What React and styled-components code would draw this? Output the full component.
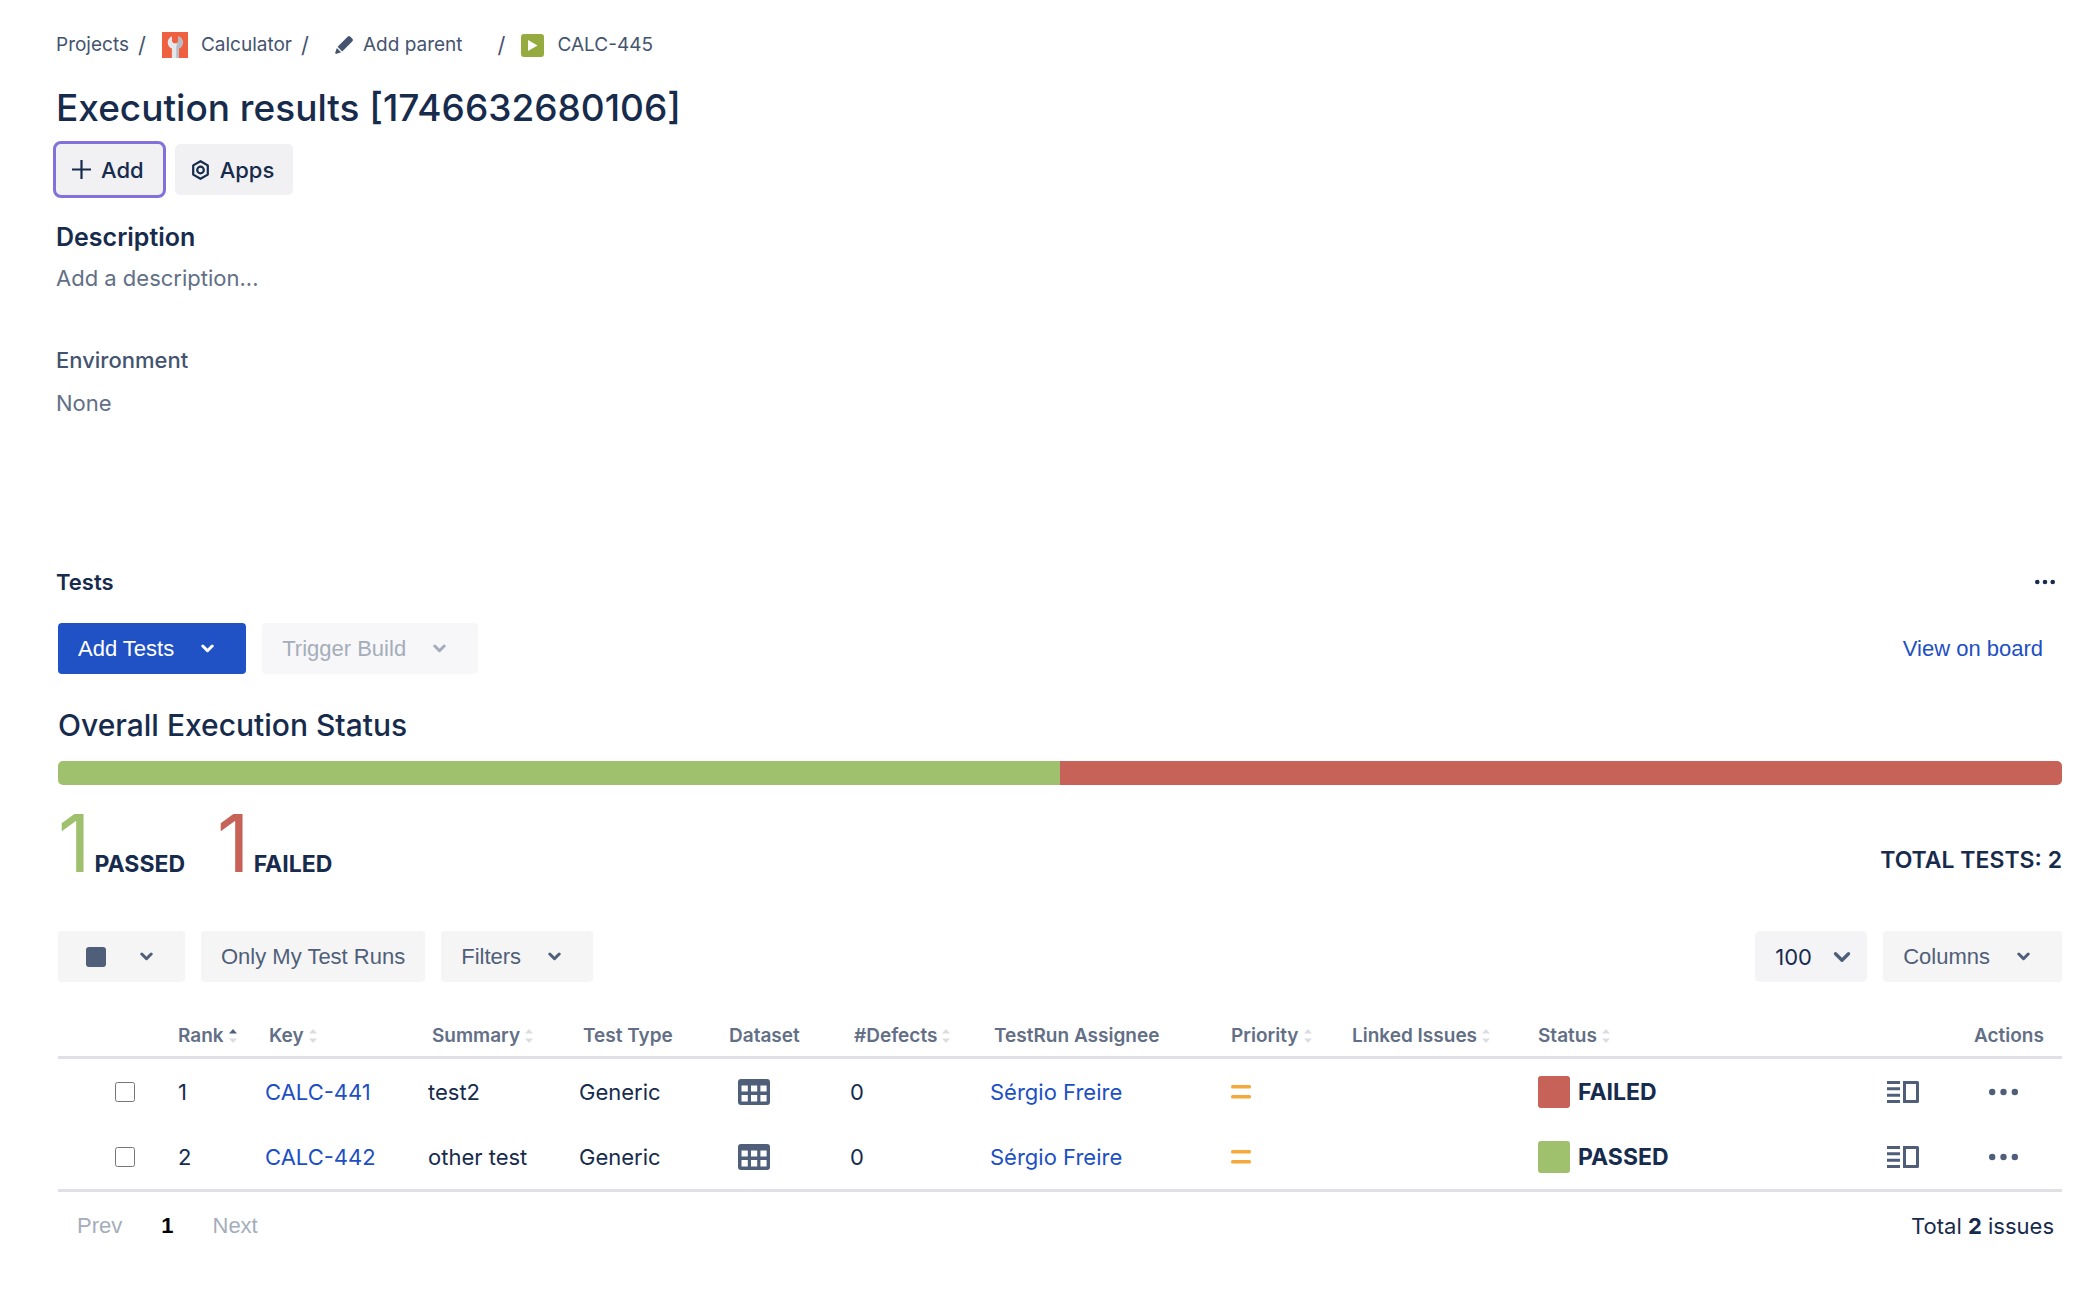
import React from "react";
import styled, { createGlobalStyle } from "styled-components";

const ui = `Inter, "Liberation Sans", sans-serif`;
const control = `"Liberation Sans", Arial, sans-serif`;

const c = {
  text: "#172b4d",
  subtle: "#44546f",
  muted: "#626f86",
  steel: "#505f79",
  disabled: "#a5adba",
  link: "#1d4fc4",
  passed: "#9fc16d",
  failed: "#c66257",
  line: "#e0e0e6",
  neutral: "#f1f1f4",
  soft: "#f5f5f6",
};

const GlobalStyle = createGlobalStyle`
  *, *::before, *::after { box-sizing: border-box; }
  body { margin: 0; background: #fff; color: ${c.text}; font-family: ${ui}; font-size: 22px; line-height: 32px; }
  h1, h2, h3, p, ol { margin: 0; padding: 0; }
  a { color: inherit; text-decoration: none; }
  button, select { border: 0; font: inherit; color: inherit; cursor: pointer; }
  svg { display: block; flex: none; }
`;

const Page = styled.main`
  padding: 28px 36px 40px 56px;
`;

const Crumbs = styled.ol`
  display: flex;
  align-items: center;
  height: 34px;
  list-style: none;
  font-size: 19px;
  color: ${c.subtle};
`;

const Crumb = styled.li`
  display: flex;
  align-items: center;
  & + &::before {
    content: "/";
    font-size: 22px;
    padding: 0 16px 0 9px;
  }
`;

const CrumbLink = styled.a`
  display: flex;
  align-items: center;
  gap: 13px;
`;

const ParentButton = styled.button`
  display: flex;
  align-items: center;
  gap: 10px;
  padding: 0 26px 0 10px;
  background: none;
`;

const Title = styled.h1`
  margin-top: 22px;
  font-size: 37px;
  line-height: 48px;
  font-weight: 500;
`;

const QuickActions = styled.div`
  display: flex;
  gap: 12px;
  margin-top: 12px;
`;

const QuickButton = styled.button`
  display: flex;
  align-items: center;
  gap: 10px;
  height: 51px;
  padding: 0 19px 0 16px;
  border-radius: 5px;
  background: ${c.neutral};
  font-weight: 500;
  outline: ${(p) => (p.$focused ? "3px solid #8270db" : "none")};
`;

const Description = styled.section`
  margin-top: 26px;
`;

const SectionTitle = styled.h2`
  font-size: 25px;
  line-height: 32px;
  font-weight: 600;
`;

const Placeholder = styled.button`
  display: block;
  margin-top: 9px;
  padding: 0;
  background: none;
  color: ${c.muted};
`;

const Environment = styled.section`
  margin-top: 50px;
`;

const FieldLabel = styled.h3`
  font-size: 22px;
  font-weight: 500;
  color: ${c.subtle};
`;

const FieldValue = styled.p`
  margin-top: 11px;
  color: ${c.muted};
`;

const Tests = styled.section`
  margin-top: 147px;
`;

const Split = styled.div`
  display: flex;
  align-items: center;
  justify-content: space-between;
`;

const TestsTitle = styled.h2`
  font-size: 22px;
  font-weight: 600;
`;

const IconButton = styled.button`
  display: flex;
  align-items: center;
  justify-content: center;
  padding: 4px ${(p) => p.$pad || 0}px;
  background: none;
  color: ${(p) => p.$color || c.steel};
`;

const Panel = styled.div`
  padding-left: 2px;
`;

const ActionBar = styled(Split)`
  margin-top: 25px;
  font-family: ${control};
`;

const Group = styled.div`
  display: flex;
  gap: 16px;
`;

const variants = {
  primary: `background: #2052c6; color: #fff;`,
  disabled: `background: #f7f7f9; color: ${c.disabled};`,
  neutral: `background: ${c.soft}; color: ${c.steel};`,
  icon: `background: ${c.soft}; color: ${c.steel}; gap: 34px; padding-left: 28px;`,
};

const Button = styled.button`
  display: flex;
  align-items: center;
  gap: 27px;
  height: 51px;
  padding: 0 ${(p) => (p.$menu ? 32 : 20)}px 0 20px;
  border-radius: 4px;
  font-family: ${control};
  font-size: 22px;
  ${(p) => variants[p.$variant || "neutral"]}
`;

const BoardLink = styled.a`
  padding-right: 19px;
  color: ${c.link};
`;

const StatusTitle = styled.h2`
  margin-top: 31px;
  font-size: 30px;
  line-height: 40px;
  font-weight: 500;
`;

const Progress = styled.div`
  display: flex;
  height: 24px;
  margin-top: 16px;
  border-radius: 5px;
  overflow: hidden;
`;

const Segment = styled.div`
  flex: ${(p) => p.$count} 1 0;
  background: ${(p) => c[p.$status]};
`;

const Summary = styled(Split)`
  margin-top: 18px;
  font-size: 23px;
  font-weight: 700;
`;

const Counters = styled.div`
  display: flex;
  gap: 32px;
`;

const Counter = styled.div`
  display: flex;
  align-items: baseline;
  gap: 4px;
`;

const CounterValue = styled.span`
  font-size: 80px;
  line-height: 80px;
  font-weight: 400;
  color: ${(p) => c[p.$status]};
`;

const Total = styled.p`
  padding-top: 34px;
  font-weight: 600;
`;

const Toolbar = styled(Split)`
  margin-top: 48px;
`;

const SelectBox = styled.label`
  position: relative;
  color: ${c.steel};
  svg {
    position: absolute;
    right: 16px;
    top: 20px;
    pointer-events: none;
  }
`;

const Select = styled.select`
  appearance: none;
  width: 112px;
  height: 51px;
  padding: 0 20px;
  border-radius: 5px;
  background: #f4f4f7;
  color: ${c.text};
`;

const Table = styled.table`
  width: 100%;
  margin-top: 34px;
  table-layout: fixed;
  border-collapse: separate;
  border-spacing: 0;
  border-bottom: 3px solid ${c.line};
`;

const Th = styled.th`
  height: 43px;
  padding: 0 0 0 ${(p) => (p.$flush ? 8 : 12)}px;
  border-bottom: 3px solid ${c.line};
  text-align: left;
  white-space: nowrap;
  font-size: 19px;
  font-weight: 600;
  color: ${c.muted};
`;

const HeadLabel = styled.span`
  display: flex;
  align-items: center;
  gap: 5px;
`;

const Td = styled.td`
  height: 65px;
  padding: 0 0 0 8px;
  white-space: nowrap;
  a { color: ${c.link}; }
`;

const CheckCell = styled(Td)`
  padding-left: 57px;
`;

const Check = styled.input`
  display: block;
  width: 20px;
  height: 20px;
  margin: 0;
`;

const Status = styled.span`
  display: flex;
  align-items: center;
  gap: 8px;
  font-size: 23px;
  font-weight: 700;
  &::before {
    content: "";
    width: 32px;
    height: 32px;
    border-radius: 3px;
    background: ${(p) => c[p.$status]};
  }
`;

const Footer = styled(Split)`
  padding: 18px 8px 0 19px;
`;

const Pager = styled.nav`
  display: flex;
  gap: 39px;
  font-family: ${control};
`;

const PageButton = styled.button`
  padding: 0;
  background: none;
  color: ${(p) => (p.$current ? "#000" : c.disabled)};
  font-weight: ${(p) => (p.$current ? 700 : 400)};
`;

const Chevron = ({ w = 13 }) => (
  <svg width={w} height={(w * 9) / 13} viewBox="0 0 13 9" fill="none" stroke="currentColor" strokeWidth={w > 13 ? 2.4 : 3} strokeLinecap="round" strokeLinejoin="round">
    <path d="M1.8 2l4.7 4.7L11.200 2" />
  </svg>
);

const Dots = ({ w, r }) => (
  <svg width={w} height={8} viewBox={`0 0 ${w} 8`} fill="currentColor">
    <circle cx={r} cy="4" r={r} />
    <circle cx={w / 2} cy="4" r={r} />
    <circle cx={w - r} cy="4" r={r} />
  </svg>
);

const Sort = ({ up }) => (
  <svg width="8" height="14" viewBox="0 0 8 14">
    <path d="M4 0l4 4.500H0z" fill={up ? c.steel : "#dcdde3"} />
    <path d="M4 14l4-4.500H0z" fill="#dcdde3" />
  </svg>
);

const ProjectIcon = () => (
  <svg width="26" height="26" viewBox="0 0 26 26">
    <path fill="#ee6040" d="M0 0h26v26H0z" />
    <path fill="#e4e8ec" d="M10 4.200v5l1.400 2h3.700l1.400-2v-5c2.500 1 4.300 3.400 4.300 6.200 0 2.800-1.700 5.100-4.100 6.200V26h-6.800v-9.400c-2.400-1.100-4.200-3.400-4.200-6.200 0-2.800 1.800-5.200 4.300-6.200z" />
    <path fill="#b4bcc6" d="M15.100 11.200l1.400-2v-5c2.500 1 4.300 3.400 4.300 6.200 0 2.800-1.700 5.100-4.100 6.200V26h-2.400V15z" />
  </svg>
);

const PencilIcon = () => (
  <svg width="18" height="18" viewBox="0 0 18 18" fill="currentColor">
    <path d="M12.600.8a2 2 0 0 1 2.800 0l1.800 1.800a2 2 0 0 1 0 2.800L7.200 15.400l-4.600-4.600zM1.800 11.900l4.300 4.300-4.600 1.600a.9.9 0 0 1-1.200-1.200z" />
  </svg>
);

const ExecutionIcon = () => (
  <svg width="23" height="23" viewBox="0 0 23 23">
    <rect width="23" height="23" rx="3" fill="#95ab3f" />
    <path d="M7 6l9.500 5.500L7 17z" fill="#fff" />
  </svg>
);

const PlusIcon = () => (
  <svg width="19" height="19" viewBox="0 0 19 19" stroke="currentColor" strokeWidth="2.200">
    <path d="M9.500 0v19M0 9.500h19" />
  </svg>
);

const AppsIcon = () => (
  <svg width="19" height="20" viewBox="0 0 19 20" fill="none" stroke="currentColor" strokeWidth="2.200" strokeLinejoin="round">
    <path d="M9.500 1.200l7.300 4.200v9.200l-7.300 4.200-7.300-4.200V5.400z" />
    <circle cx="9.500" cy="10" r="3.300" />
  </svg>
);

const SquareIcon = () => (
  <svg width="20" height="20" viewBox="0 0 20 20">
    <rect width="20" height="20" rx="3" fill="currentColor" />
  </svg>
);

const DatasetIcon = () => (
  <svg width="32" height="26" viewBox="0 0 32 26" fill="currentColor" fillRule="evenodd">
    <path d="M3 0h26a3 3 0 0 1 3 3v20a3 3 0 0 1-3 3H3a3 3 0 0 1-3-3V3a3 3 0 0 1 3-3zM3.500 6.500v6h6.300v-6zM13 6.500v6h6.200v-6zM22.400 6.500v6h6.200v-6zM3.500 16v6.500h6.300V16zM13 16v6.500h6.200V16zM22.400 16v6.500h6.200V16z" />
  </svg>
);

const PriorityIcon = () => (
  <svg width="20" height="14" viewBox="0 0 20 14" fill="#f5a93b">
    <rect width="20" height="3.600" rx="1.500" />
    <rect y="10" width="20" height="3.600" rx="1.500" />
  </svg>
);

const DetailsIcon = () => (
  <svg width="32" height="22" viewBox="0 0 32 22" fill="currentColor">
    <path d="M0 0h13v3H0zM0 6.300h13v3H0zM0 12.700h13v3H0zM0 19h13v3H0z" />
    <path fillRule="evenodd" d="M16 0h14.500A1.500 1.500 0 0 1 32 1.500v19a1.500 1.500 0 0 1-1.500 1.500H16zM19 3v16h10V3z" />
  </svg>
);

const columns = [
  { width: 112, label: "" },
  { width: 87, label: "Rank", sort: "up", flush: true },
  { width: 163, label: "Key", sort: "none" },
  { width: 151, label: "Summary", sort: "none" },
  { width: 146, label: "Test Type" },
  { width: 125, label: "Dataset" },
  { width: 140, label: "#Defects", sort: "none" },
  { width: 241, label: "TestRun Assignee" },
  { width: 117, label: "Priority", sort: "none", flush: true },
  { width: 190, label: "Linked Issues", sort: "none" },
  { width: 349, label: "Status", sort: "none", flush: true },
  { width: 83, label: "" },
  { width: 100, label: "Actions" },
];

const runs = [
  { rank: 1, key: "CALC-441", summary: "test2", status: "failed" },
  { rank: 2, key: "CALC-442", summary: "other test", status: "passed" },
];

const MenuButton = ({ children, variant, ...rest }) => (
  <Button type="button" aria-haspopup="menu" $menu $variant={variant} {...rest}>
    {children}
    <Chevron />
  </Button>
);

export default function App() {
  return (
    <>
      <GlobalStyle />
      <Page>
        <nav aria-label="Breadcrumbs">
          <Crumbs>
            <Crumb><CrumbLink href="#projects">Projects</CrumbLink></Crumb>
            <Crumb><CrumbLink href="#calculator"><ProjectIcon />Calculator</CrumbLink></Crumb>
            <Crumb><ParentButton type="button"><PencilIcon />Add parent</ParentButton></Crumb>
            <Crumb><CrumbLink href="#calc-445"><ExecutionIcon />CALC-445</CrumbLink></Crumb>
          </Crumbs>
        </nav>
        <Title>Execution results [1746632680106]</Title>
        <QuickActions>
          <QuickButton type="button" $focused><PlusIcon />Add</QuickButton>
          <QuickButton type="button"><AppsIcon />Apps</QuickButton>
        </QuickActions>

        <Description>
          <SectionTitle>Description</SectionTitle>
          <Placeholder type="button">Add a description...</Placeholder>
        </Description>
        <Environment>
          <FieldLabel>Environment</FieldLabel>
          <FieldValue>None</FieldValue>
        </Environment>

        <Tests>
          <Split>
            <TestsTitle>Tests</TestsTitle>
            <IconButton type="button" aria-label="More options" $pad={7} $color={c.text}><Dots w={20} r={2.3} /></IconButton>
          </Split>
          <Panel>
            <ActionBar>
              <Group>
                <MenuButton variant="primary">Add Tests</MenuButton>
                <MenuButton variant="disabled" disabled>Trigger Build</MenuButton>
              </Group>
              <BoardLink href="#board">View on board</BoardLink>
            </ActionBar>

            <StatusTitle>Overall Execution Status</StatusTitle>
            <Progress>
              <Segment $status="passed" $count={1} />
              <Segment $status="failed" $count={1} />
            </Progress>
            <Summary>
              <Counters>
                <Counter><CounterValue $status="passed">1</CounterValue>PASSED</Counter>
                <Counter><CounterValue $status="failed">1</CounterValue>FAILED</Counter>
              </Counters>
              <Total>TOTAL TESTS: 2</Total>
            </Summary>

            <Toolbar>
              <Group>
                <MenuButton variant="icon" aria-label="Bulk selection"><SquareIcon /></MenuButton>
                <Button type="button">Only My Test Runs</Button>
                <MenuButton>Filters</MenuButton>
              </Group>
              <Group>
                <SelectBox>
                  <Select aria-label="Rows per page" defaultValue="100">
                    <option>10</option>
                    <option>50</option>
                    <option>100</option>
                  </Select>
                  <Chevron w={18} />
                </SelectBox>
                <MenuButton>Columns</MenuButton>
              </Group>
            </Toolbar>

            <Table>
              <colgroup>
                {columns.map((col, i) => <col key={i} width={col.width} />)}
              </colgroup>
              <thead>
                <tr>
                  {columns.map((col, i) => (
                    <Th key={i} scope="col" $flush={col.flush}>
                      <HeadLabel>{col.label}{col.sort && <Sort up={col.sort === "up"} />}</HeadLabel>
                    </Th>
                  ))}
                </tr>
              </thead>
              <tbody>
                {runs.map((run) => (
                  <tr key={run.key}>
                    <CheckCell><Check type="checkbox" aria-label={`Select ${run.key}`} /></CheckCell>
                    <Td>{run.rank}</Td>
                    <Td><a href={`#${run.key}`}>{run.key}</a></Td>
                    <Td>{run.summary}</Td>
                    <Td>Generic</Td>
                    <Td><IconButton type="button" aria-label="Dataset" $pad={13}><DatasetIcon /></IconButton></Td>
                    <Td>0</Td>
                    <Td><a href="#assignee">Sérgio Freire</a></Td>
                    <Td><PriorityIcon /></Td>
                    <Td />
                    <Td><Status $status={run.status}>{run.status.toUpperCase()}</Status></Td>
                    <Td><IconButton type="button" aria-label="Execution details"><DetailsIcon /></IconButton></Td>
                    <Td><IconButton type="button" aria-label="Row actions" $pad={19}><Dots w={29} r={3.2} /></IconButton></Td>
                  </tr>
                ))}
              </tbody>
            </Table>

            <Footer>
              <Pager aria-label="Pagination">
                <PageButton type="button" disabled>Prev</PageButton>
                <PageButton type="button" $current aria-current="page">1</PageButton>
                <PageButton type="button" disabled>Next</PageButton>
              </Pager>
              <p>Total <b>2</b> issues</p>
            </Footer>
          </Panel>
        </Tests>
      </Page>
    </>
  );
}
